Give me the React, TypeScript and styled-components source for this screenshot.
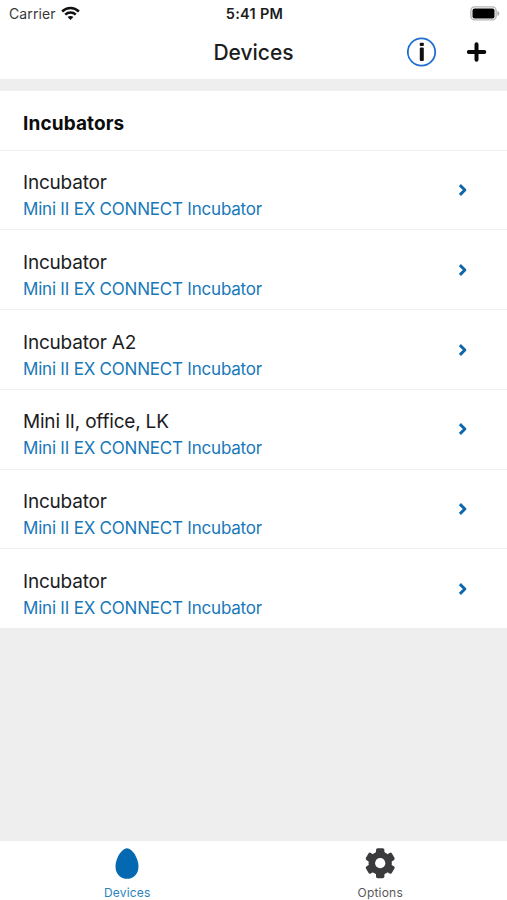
import React from 'react';
import styled, { createGlobalStyle } from 'styled-components';

const GlobalStyle = createGlobalStyle`
  * { box-sizing: border-box; }
  body { margin: 0; background: #eeeeee; }
`;

const Screen = styled.div`
  width: 507px;
  height: 900px;
  display: flex;
  flex-direction: column;
  background: #eeeeee;
  font-family: Inter, 'Liberation Sans', sans-serif;
  color: #1c1c1e;
  overflow: hidden;
`;

const StatusBar = styled.header`
  height: 28px;
  flex: none;
  display: grid;
  grid-template-columns: 1fr auto 1fr;
  align-items: center;
  padding: 0 7px 0 9px;
  background: #fff;
`;

const Carrier = styled.div`
  display: flex;
  align-items: center;
  gap: 5px;
  font-size: 14px;
  line-height: 28px;
  letter-spacing: 0.12px;
  color: #38383a;
  svg { margin-bottom: 2px; }
`;

const Clock = styled.div`
  font-size: 14.5px;
  line-height: 28px;
  font-weight: 600;
  letter-spacing: 0.3px;
  color: #1c1c1e;
`;

const Battery = styled.div`
  display: flex;
  justify-content: flex-end;
  padding-bottom: 2px;
`;

const NavBar = styled.nav`
  height: 51px;
  flex: none;
  display: grid;
  grid-template-columns: 1fr auto 1fr;
  align-items: center;
  padding: 0 20px 3px;
  background: #fff;
`;

const NavTitle = styled.h1`
  grid-column: 2;
  margin: 0;
  padding-top: 2px;
  font-size: 21px;
  line-height: 26px;
  font-weight: 500;
`;

const Actions = styled.div`
  display: flex;
  justify-content: flex-end;
  align-items: center;
  gap: 30px;
`;

const IconButton = styled.button`
  display: flex;
  padding: 0;
  border: 0;
  background: none;
`;

const Content = styled.main`
  flex: 1;
  padding-top: 12px;
`;

const SectionTitle = styled.h2`
  height: 58.7px;
  margin: 0;
  padding: 0 23px;
  background: #fff;
  font-size: 19px;
  line-height: 65px;
  font-weight: 700;
  letter-spacing: 0.12px;
  color: #0c0c0d;
`;

const List = styled.ul`
  margin: 0;
  padding: 0;
  list-style: none;
`;

const Row = styled.li`
  height: 79.75px;
  display: flex;
  align-items: center;
  justify-content: space-between;
  padding: 0 39px 0 23px;
  border-top: 1.5px solid #f0f0f0;
  background: #fff;
`;

const RowText = styled.div`
  padding-top: 13px;
`;

const RowTitle = styled.div`
  font-size: 19px;
  line-height: 26px;
  letter-spacing: -0.2px;
`;

const RowSubtitle = styled.div`
  font-size: 17px;
  line-height: 27px;
  letter-spacing: -0.21px;
  color: #1878b9;
`;

const TabBar = styled.footer`
  height: 59px;
  flex: none;
  display: grid;
  grid-template-columns: 1fr 1fr;
  background: #fff;
`;

const Tab = styled.div<{ $active?: boolean }>`
  display: flex;
  flex-direction: column;
  align-items: center;
  padding-top: 5px;
  padding-left: ${(p) => (p.$active ? '1px' : '0')};
  font-size: 12px;
  line-height: 16px;
  letter-spacing: 0.2px;
  color: ${(p) => (p.$active ? '#2b82bd' : '#58585a')};
  svg { height: 34px; margin-bottom: 5px; }
`;

const WifiIcon = () => (
  <svg width="19" height="15" viewBox="0 0 19 15" fill="none" stroke="#111" strokeWidth="2.5">
    <path d="M1.1 5.5C5.9.8 13.1.8 17.9 5.5" />
    <path d="M4.2 8.7c3-2.8 7.6-2.8 10.6 0" />
    <path d="M6.6 11.1c1.6-1.6 4.2-1.6 5.8 0L9.5 14z" fill="#111" stroke="none" />
  </svg>
);

const BatteryIcon = () => (
  <svg width="30" height="15" viewBox="0 0 30 15">
    <rect x=".9" y=".9" width="25.2" height="13" rx="3.6" fill="#fff" stroke="#b5b5b5" strokeWidth="1.4" />
    <rect x="2.5" y="2.6" width="22" height="9.8" rx="2" fill="#000" />
    <path d="M27.4 5c2.6.8 2.6 4.2 0 5z" fill="#aaa" />
  </svg>
);

const InfoIcon = () => (
  <svg width="30" height="30" viewBox="0 0 30 30">
    <circle cx="14.5" cy="15" r="13.7" fill="none" stroke="#1f6fd0" strokeWidth="1.8" />
    <rect x="12.8" y="5.8" width="4" height="3.2" rx=".8" fill="#111" />
    <rect x="12.8" y="10.4" width="4" height="13.6" rx="1" fill="#111" />
  </svg>
);

const PlusIcon = () => (
  <svg width="20" height="20" viewBox="0 0 20 20" stroke="#0a0a0a" strokeWidth="4" strokeLinecap="round">
    <path d="M9.5 2.3v15.4M1.9 10h15.4" />
  </svg>
);

const Chevron = () => (
  <svg width="10" height="12" viewBox="0 0 10 12" fill="none" stroke="#0c66ac" strokeWidth="2.9" strokeLinejoin="round">
    <path d="M1.9 1.1 6.9 6l-5 4.9" />
  </svg>
);

const EggIcon = () => (
  <svg width="24" height="34" viewBox="0 0 24 34">
    <path d="M12 2.2C6.6 2.2.5 12.4.5 20.4.5 28 5.7 32.8 12 32.8S23.5 28 23.5 20.4C23.5 12.4 17.4 2.2 12 2.2z" fill="#0469b0" />
  </svg>
);

const GearIcon = () => (
  <svg width="34" height="34" viewBox="0 0 34 34">
    <g fill="#3b3b3d">
      {[0, 60, 120].map((angle) => (
        <rect key={angle} x="13" y="2.2" width="8.4" height="30" rx="1.7" transform={`rotate(${angle} 17.2 17.2)`} />
      ))}
      <circle cx="17.2" cy="17.2" r="11.6" />
    </g>
    <circle cx="17.2" cy="17.2" r="5.1" fill="#fff" />
  </svg>
);

const devices = ['Incubator', 'Incubator', 'Incubator A2', 'Mini II, office, LK', 'Incubator', 'Incubator'];

export default function App() {
  return (
    <Screen>
      <GlobalStyle />
      <StatusBar>
        <Carrier>Carrier <WifiIcon /></Carrier>
        <Clock>5:41 PM</Clock>
        <Battery><BatteryIcon /></Battery>
      </StatusBar>
      <NavBar>
        <NavTitle>Devices</NavTitle>
        <Actions>
          <IconButton aria-label="Information"><InfoIcon /></IconButton>
          <IconButton aria-label="Add device"><PlusIcon /></IconButton>
        </Actions>
      </NavBar>
      <Content>
        <SectionTitle>Incubators</SectionTitle>
        <List>
          {devices.map((name, index) => (
            <Row key={index}>
              <RowText>
                <RowTitle>{name}</RowTitle>
                <RowSubtitle>Mini II EX CONNECT Incubator</RowSubtitle>
              </RowText>
              <Chevron />
            </Row>
          ))}
        </List>
      </Content>
      <TabBar>
        <Tab $active><EggIcon />Devices</Tab>
        <Tab><GearIcon />Options</Tab>
      </TabBar>
    </Screen>
  );
}
